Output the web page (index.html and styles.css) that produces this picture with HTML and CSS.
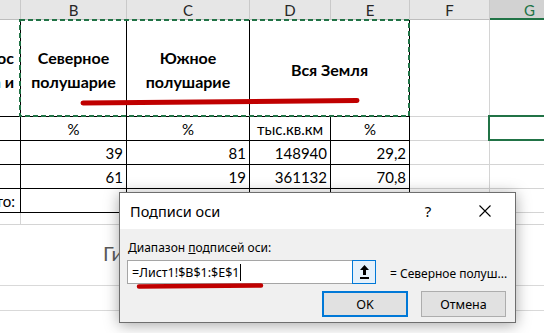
FILE: index.html
```html
<!DOCTYPE html>
<html lang="ru">
  <head>
    <meta charset="UTF-8" />
    <title>Подписи оси</title>
    <link rel="stylesheet" href="styles.css">
  </head>
  <body>
    <div class="sheet">
      <div class="grid">
        <div class="head"></div>
        <div class="head">B</div>
        <div class="head">C</div>
        <div class="head">D</div>
        <div class="head">E</div>
        <div class="head">F</div>
        <div class="head sel">G</div>

        <div class="cell tb title left-cut">Вопрос<br>Суша и</div>
        <div class="cell tb title">Северное<br>полушарие</div>
        <div class="cell tb title">Южное<br>полушарие</div>
        <div class="cell tb title wide">Вся Земля</div>
        <div class="cell"></div>
        <div class="cell"></div>

        <div class="cell tb"></div>
        <div class="cell tb mid">%</div>
        <div class="cell tb mid">%</div>
        <div class="cell tb mid">тыс.кв.км</div>
        <div class="cell tb mid">%</div>
        <div class="cell"></div>
        <div class="cell"></div>

        <div class="cell tb"></div>
        <div class="cell tb num">39</div>
        <div class="cell tb num">81</div>
        <div class="cell tb num">148940</div>
        <div class="cell tb num">29,2</div>
        <div class="cell"></div>
        <div class="cell"></div>

        <div class="cell tb"></div>
        <div class="cell tb num">61</div>
        <div class="cell tb num">19</div>
        <div class="cell tb num">361132</div>
        <div class="cell tb num">70,8</div>
        <div class="cell"></div>
        <div class="cell"></div>

        <div class="cell tb num total">Всё это:</div>
        <div class="cell tb"></div>
        <div class="cell tb"></div>
        <div class="cell tb"></div>
        <div class="cell tb"></div>
        <div class="cell"></div>
        <div class="cell"></div>

        <div class="cell"></div>
        <div class="cell"></div>
        <div class="cell"></div>
        <div class="cell"></div>
        <div class="cell"></div>
        <div class="cell"></div>
        <div class="cell"></div>
      </div>

      <div class="chart">
        <div class="chart-title">Гистограмма</div>
        <div class="chart-line first"></div>
        <div class="chart-line"></div>
      </div>

      <div class="dialog">
        <div class="dlg-title">
          <span class="dlg-caption">Подписи оси</span>
          <span class="dlg-help">?</span>
          <span class="dlg-close">
            <svg width="12" height="12" viewBox="0 0 12 12">
              <path d="M0.5 0.5 L11.5 11.5 M11.5 0.5 L0.5 11.5" stroke="#000" stroke-width="1.1" fill="none" />
            </svg>
          </span>
        </div>
        <div class="dlg-body">
          <div class="dlg-label">Диапазон <u>п</u>одписей оси:</div>
          <div class="dlg-range">
            <div class="ref-input">
              <span class="ref-text">=Лист1!$B$1:$E$1</span>
              <span class="caret"></span>
              <span class="collapse-btn">
                <svg width="9" height="14" viewBox="0 0 9 14">
                  <path d="M4.5 0 L9 5 L6 5 L6 10 L3 10 L3 5 L0 5 Z" fill="#000" />
                  <rect x="0" y="12" width="9" height="2" fill="#000" />
                </svg>
              </span>
            </div>
            <span class="preview">= Северное полуш...</span>
          </div>
          <div class="dlg-buttons">
            <button class="btn btn-default">OK</button>
            <button class="btn">Отмена</button>
          </div>
        </div>
      </div>

      <!-- copy marquee, active cell and the red pen marks drawn over the sheet -->
      <svg class="marks" width="544" height="333" viewBox="0 0 544 333">
        <rect x="20" y="20" width="389" height="96" fill="none" stroke="#217346" stroke-width="2" stroke-dasharray="5 3" />
        <rect x="489" y="116" width="80" height="24" fill="none" stroke="#217346" stroke-width="2" />
        <path d="M83 103 L357 100.5" stroke="#c00000" stroke-width="5" stroke-linecap="round" fill="none" />
        <path d="M139 286.5 L261 285.5" stroke="#c00000" stroke-width="4.5" stroke-linecap="round" fill="none" />
      </svg>
    </div>
  </body>
</html>
```

FILE: styles.css
```css
body {
  margin: 0;
  background: #fff;
  font-family: Lato, "Liberation Sans", sans-serif;
  overflow: hidden;
}

.sheet {
  position: relative;
  width: 544px;
  height: 333px;
  overflow: hidden;
}

.grid {
  display: grid;
  grid-template-columns: 21px 106px 123px 81px 79px 80px 80px;
  grid-template-rows: 20px 97px 24px 24px 24px 24px 12px;
  width: 570px;
}

.head {
  background: #e6e6e6;
  border-right: 1px solid #c9c9c9;
  border-bottom: 1px solid #bdbdbd;
  display: flex;
  align-items: center;
  justify-content: center;
  font-size: 15px;
  color: #262626;
  padding-top: 1px;
}

.head.sel {
  background: #d2d2d2;
  color: #217346;
  border-bottom: 2px solid #217346;
}

.cell {
  box-sizing: border-box;
  border-right: 1px solid #d4d4d4;
  border-bottom: 1px solid #d4d4d4;
  display: flex;
  align-items: center;
  overflow: hidden;
  white-space: nowrap;
  font-size: 15px;
  color: #000;
  padding: 0 3px;
}

.cell.tb {
  border-color: #000;
}

.title {
  font-weight: bold;
  font-size: 16px;
  line-height: 24px;
  text-align: center;
  justify-content: center;
  padding-top: 4px;
}

.title.wide {
  grid-column: span 2;
}

.left-cut {
  justify-content: flex-end;
  text-align: right;
  padding-right: 6px;
}

.mid {
  justify-content: center;
}

.num {
  justify-content: flex-end;
}

.total {
  padding-right: 5px;
}

.chart {
  height: 108px;
  background: #fff;
}

.chart-title {
  padding: 13px 0 0 103px;
  font-size: 20px;
  line-height: 30px;
  color: #595959;
}

.chart-line {
  border-top: 1px solid #d9d9d9;
  margin-top: 24px;
}

.chart-line.first {
  margin-top: 17px;
}

.dialog {
  position: absolute;
  left: 119px;
  top: 192px;
  width: 395px;
  border: 1px solid #6e6e6e;
  background: #f0f0f0;
  box-shadow: 0 2px 14px rgba(0, 0, 0, 0.35);
  font-family: "Noto Sans", "Open Sans", sans-serif;
  z-index: 5;
}

.dlg-title {
  height: 36px;
  background: #fff;
  display: flex;
  align-items: center;
}

.dlg-caption {
  padding-left: 10px;
  font-size: 14.5px;
  color: #000;
}

.dlg-help {
  margin-left: auto;
  width: 46px;
  margin-right: 11px;
  text-align: center;
  font-size: 15px;
  color: #000;
}

.dlg-close {
  width: 46px;
  margin-right: 7px;
  display: flex;
  justify-content: center;
}

.dlg-body {
  padding: 11px 9px 5px 7px;
}

.dlg-label {
  padding-left: 1px;
  font-size: 12px;
  line-height: 16px;
  color: #000;
}

.dlg-range {
  display: flex;
  align-items: center;
  margin-top: 4px;
}

.ref-input {
  box-sizing: border-box;
  flex: none;
  width: 249px;
  height: 24px;
  border: 1px solid #a5a5a5;
  background: #fff;
  display: flex;
  align-items: center;
  padding-left: 4px;
}

.ref-text {
  font-size: 12.5px;
  color: #000;
}

.caret {
  width: 1px;
  height: 17px;
  background: #000;
  margin-left: 1px;
}

.collapse-btn {
  box-sizing: border-box;
  margin-left: auto;
  margin-right: -1px;
  width: 24px;
  height: 24px;
  background: #e5f1fb;
  border: 1px solid #0078d7;
  display: flex;
  align-items: center;
  justify-content: center;
}

.preview {
  margin-left: 14px;
  font-size: 12px;
  color: #000;
  padding-top: 3px;
  white-space: nowrap;
}

.dlg-buttons {
  display: flex;
  justify-content: flex-end;
  gap: 13px;
  margin-top: 7px;
}

.btn {
  box-sizing: border-box;
  width: 85px;
  height: 26px;
  background: #e1e1e1;
  border: 1px solid #adadad;
  font-family: "Noto Sans", "Open Sans", sans-serif;
  font-size: 12.5px;
  color: #000;
  padding: 0;
}

.btn-default {
  width: 86px;
  border: 2px solid #0078d7;
}

.marks {
  position: absolute;
  left: 0;
  top: 0;
  z-index: 10;
  pointer-events: none;
}
```
